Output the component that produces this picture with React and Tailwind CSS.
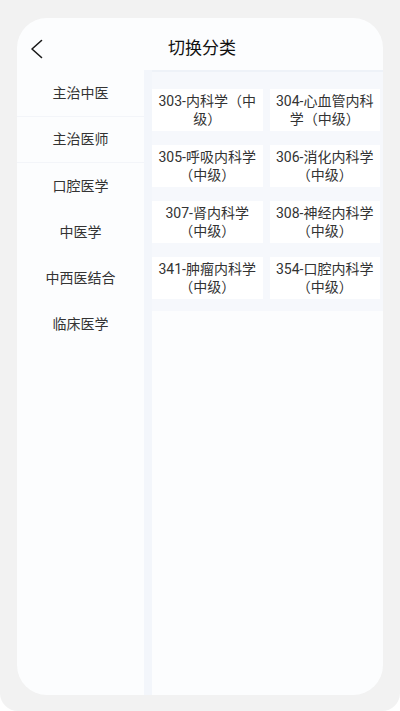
const categories = ["主治中医", "主治医师", "口腔医学", "中医学", "中西医结合", "临床医学"];

const subjects = [
  "303-内科学（中级）",
  "304-心血管内科学（中级）",
  "305-呼吸内科学（中级）",
  "306-消化内科学（中级）",
  "307-肾内科学（中级）",
  "308-神经内科学（中级）",
  "341-肿瘤内科学（中级）",
  "354-口腔内科学（中级）",
];

export default function App() {
  return (
    <div
      className="w-[400px] h-[711px] bg-white"
      style={{ fontFamily: 'Roboto, "Noto Sans CJK SC", sans-serif' }}
    >
      <div className="h-full bg-[#f2f2f2] rounded-b-[18px] pt-[18px] pb-[16px] px-[17px]">
        <div className="h-full bg-[#fcfdfe] rounded-[30px] flex flex-col overflow-hidden">
          {/* header */}
          <div className="h-[52px] shrink-0 flex items-center relative pt-[10px]">
            <button className="absolute left-[13px] top-[21px]">
              <svg width="14" height="20" viewBox="0 0 14 20" fill="none">
                <polyline
                  points="11.5,1.5 2,10 11.5,18.5"
                  stroke="#1a1a1a"
                  strokeWidth="1.6"
                  strokeLinecap="round"
                  strokeLinejoin="round"
                />
              </svg>
            </button>
            <h1 className="flex-1 text-center text-[17px] text-[#111] pl-[4px]">切换分类</h1>
          </div>

          {/* body */}
          <div className="flex-1 flex">
            <div className="w-[127px] shrink-0 pt-[1px]">
              {categories.map((c, i) => (
                <div
                  key={c}
                  className={
                    "h-[46px] flex items-center justify-center text-[14px] text-[#333] " +
                    (i < 2 ? "border-b border-[#f3f5f9]" : "")
                  }
                >
                  {c}
                </div>
              ))}
            </div>

            <div className="w-[8px] shrink-0 bg-[#f3f6fb]" />

            <div className="flex-1">
              <div className="bg-[#f6f8fc] border-t-2 border-[#eef2f8] pt-[17px] pb-[12px] pr-[3px]">
                <div className="grid grid-cols-2 gap-x-[7px] gap-y-[14px]">
                  {subjects.map(s => (
                    <div
                      key={s}
                      className="h-[42px] bg-white flex items-center justify-center px-[3px] text-center text-[14px] leading-[18px] text-[#333]"
                    >
                      {s}
                    </div>
                  ))}
                </div>
              </div>
            </div>
          </div>
        </div>
      </div>
    </div>
  );
}
